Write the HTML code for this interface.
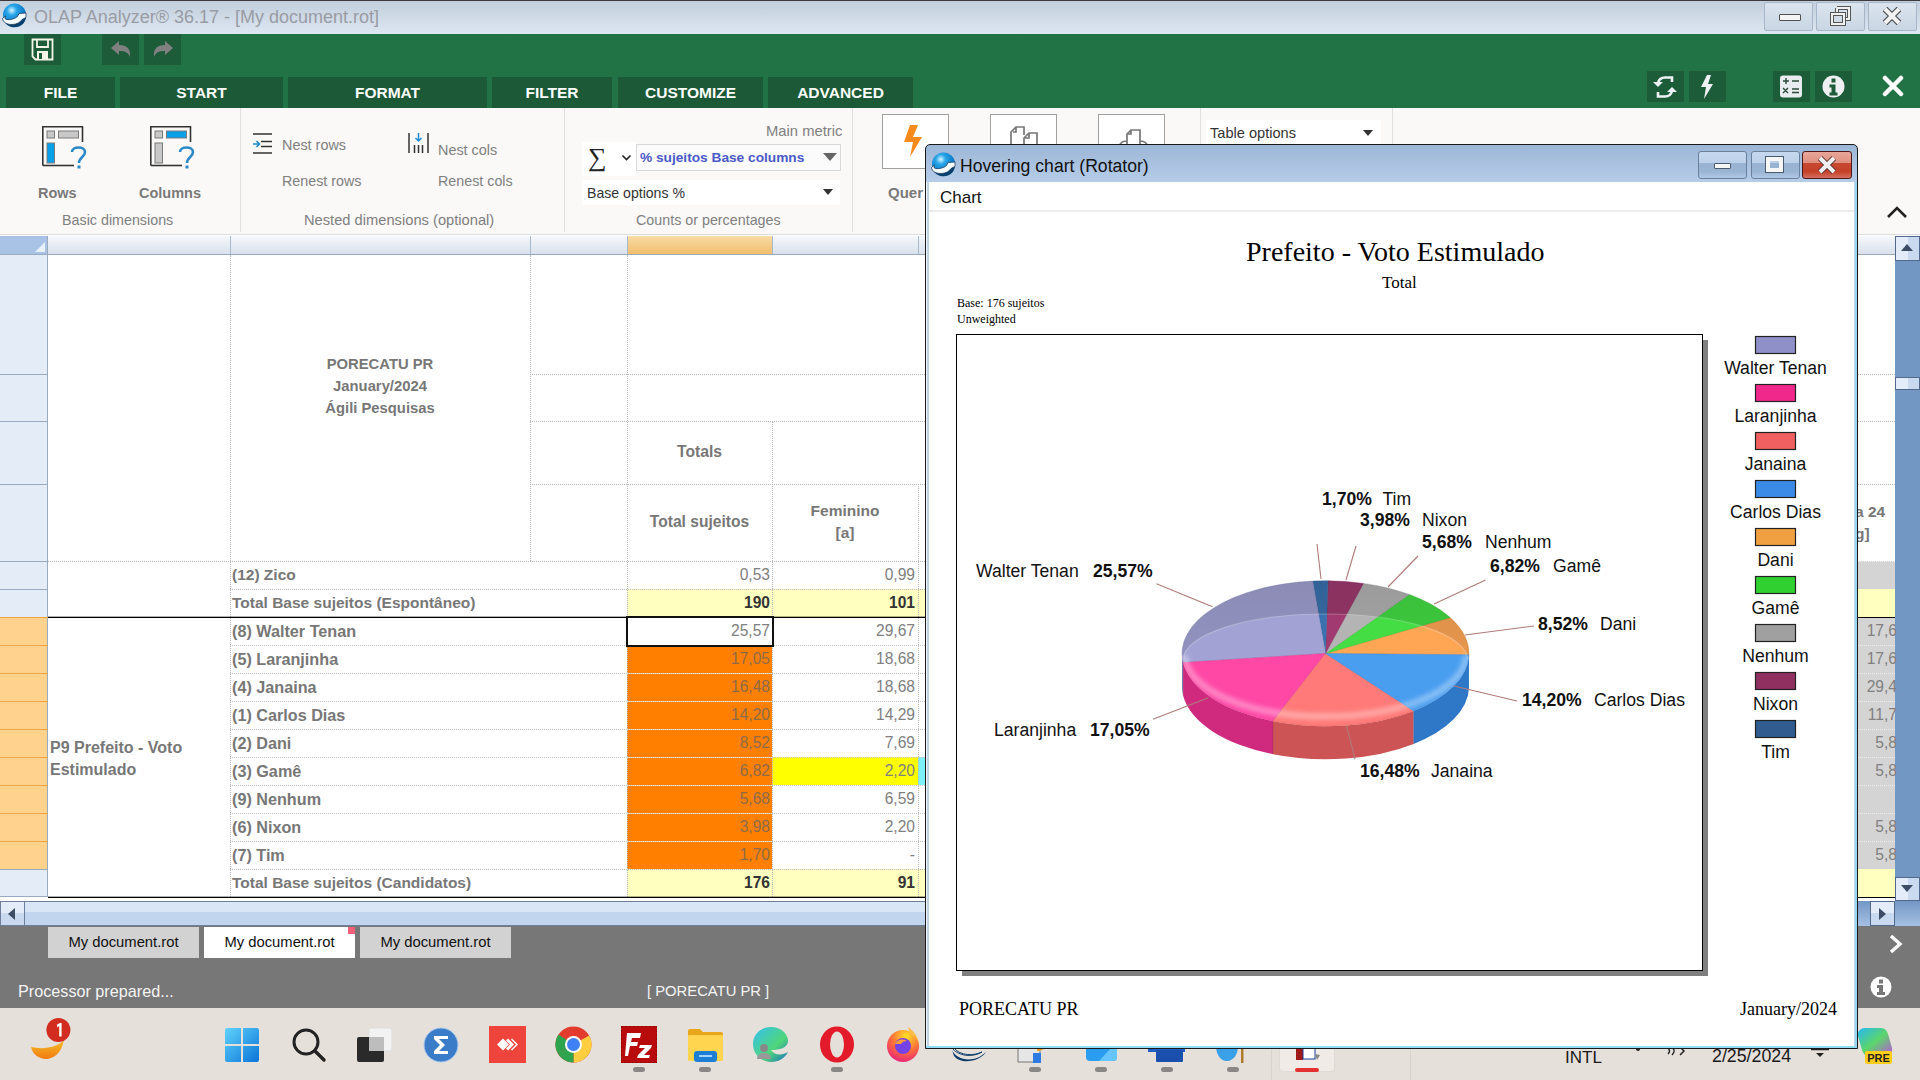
<!DOCTYPE html>
<html><head><meta charset="utf-8">
<style>
*{box-sizing:border-box;margin:0;padding:0}
html,body{width:1920px;height:1080px;overflow:hidden;background:#fff;font-family:"Liberation Sans",sans-serif}
.a{position:absolute}
.t{position:absolute;white-space:pre;line-height:1}
/* title bar */
#title{left:0;top:0;width:1920px;height:34px;background:linear-gradient(#c2cedc,#dde7f2);border-top:1px solid #3b3b3b}
#green{left:0;top:34px;width:1920px;height:74px;background:#217346}
.qb{top:34px;width:37px;height:31px;background:#1c5c38}
.tab{top:77px;height:31px;background:#1c5936;color:#fff;font-weight:bold;font-size:15.5px;text-align:center;line-height:31px}
.gb{top:71px;width:37px;height:31px;background:#1c5c38}
#ribbon{left:0;top:108px;width:1920px;height:127px;background:#faf9f8;border-bottom:1px solid #dcdcdc}
.rsep{top:108px;width:1px;height:124px;background:#e1dfdd}
.rt{color:#808080;font-size:15px}
/* grid */
#grid{left:0;top:235px;width:1920px;height:666px;background:#fff}
.hdr{top:236px;height:19px;background:linear-gradient(#f5f8fc,#d9e1eb);border-bottom:1px solid #9aabbf}
.rh{left:0;width:48px;background:#e4ecf7;border-right:1px solid #9aabbf}
.dl{border-top:1px dotted #bbb}
.dv{border-left:1px dotted #bbb}
.cell{font-size:15.5px;color:#666;line-height:28px;height:28px}
.b{font-weight:bold}
#status{left:0;top:926px;width:1920px;height:82px;background:#777}
#taskbar{left:0;top:1008px;width:1920px;height:72px;background:#e6e0da}
/* chart window */
#cw{left:925px;top:144px;width:933px;height:905px;border:1px solid #1a1a1a;border-radius:6px 6px 0 0;background:#b9d1ea}
</style></head><body>
<div id="title" class="a"></div>
<div class="t" style="left:34px;top:8px;font-size:18px;color:#999ca3">OLAP Analyzer® 36.17 - [My document.rot]</div>
<div id="green" class="a"></div>

<!-- app icon -->
<svg class="a" style="left:0;top:0" width="30" height="32" viewBox="0 0 30 32"><defs><radialGradient id="gl" cx="0.38" cy="0.3" r="0.7"><stop offset="0" stop-color="#d8f6ff"/><stop offset="0.3" stop-color="#2aa6e8"/><stop offset="0.8" stop-color="#0a78c8"/><stop offset="1" stop-color="#06508e"/></radialGradient></defs>
<circle cx="14.5" cy="15" r="11.5" fill="url(#gl)"/>
<path d="M4 21 C7 27 14 28.5 19 26.5 C23 25 25.5 21.5 26 17 L21 20 C18 23 12 24 8 22.5 Z" fill="#06406e"/>
<path d="M2.5 18.5 C3 22.5 7 24.5 12 24.5 C17 24.5 20.5 22 22 19.5 L26 17.5 L26 13 L19 13.5 L17.5 16.5 C15 19 10 20 6.5 19.5 C5 19.3 4.8 18 5.5 16 Z" fill="#f4fcff" stroke="#0d2a4a" stroke-width="0.7"/></svg>
<!-- window buttons -->
<div class="a" style="left:1764px;top:2px;width:49px;height:29px;border:1px solid #a7b6c8;border-radius:2px;background:linear-gradient(#dbe4ee,#c9d6e4)"></div>
<div class="a" style="left:1779px;top:14px;width:22px;height:7px;background:#f4f4f4;border:1.5px solid #505050;border-radius:1px"></div>
<div class="a" style="left:1816px;top:2px;width:49px;height:29px;border:1px solid #a7b6c8;border-radius:2px;background:linear-gradient(#dbe4ee,#c9d6e4)"></div>
<svg class="a" style="left:1828px;top:5px" width="26" height="22" viewBox="0 0 26 22"><path d="M9 3h12v11h-5M9 3v5" fill="none" stroke="#555" stroke-width="4"/><path d="M9 3h12v11h-5M9 3v5" fill="none" stroke="#f0f0f0" stroke-width="2"/><rect x="4" y="9" width="12" height="10" fill="none" stroke="#555" stroke-width="4"/><rect x="4" y="9" width="12" height="10" fill="none" stroke="#f0f0f0" stroke-width="2"/></svg>
<div class="a" style="left:1868px;top:2px;width:49px;height:29px;border:1px solid #a7b6c8;border-radius:2px;background:linear-gradient(#dbe4ee,#c9d6e4)"></div>
<svg class="a" style="left:1880px;top:6px" width="24" height="20" viewBox="0 0 24 20"><path d="M5 3L19 17M19 3L5 17" stroke="#505050" stroke-width="6.5"/><path d="M5 3L19 17M19 3L5 17" stroke="#f2f2f2" stroke-width="4"/></svg>
<!-- quick access -->
<div class="a qb" style="left:24px"></div>
<svg class="a" style="left:31px;top:38px" width="23" height="23" viewBox="0 0 23 23"><path d="M1.5 1.5h20v20h-17l-3-3z" fill="none" stroke="#f5f5e8" stroke-width="1.8"/><path d="M6 2v7h11V2" fill="none" stroke="#f5f5e8" stroke-width="1.8"/><rect x="6" y="13" width="11" height="8" fill="#f5f5e8"/><rect x="8" y="15" width="3" height="6" fill="#1c5c38"/></svg>
<div class="a qb" style="left:102px"></div>
<svg class="a" style="left:109px;top:38px" width="24" height="22" viewBox="0 0 24 22"><path d="M2 10L10 3v4c8 0 12 4 11 12c-2-5-5-6-11-6v4z" fill="#808080"/></svg>
<div class="a qb" style="left:144px"></div>
<svg class="a" style="left:151px;top:38px" width="24" height="22" viewBox="0 0 24 22"><path d="M22 10L14 3v4c-8 0-12 4-11 12c2-5 5-6 11-6v4z" fill="#808080"/></svg>
<!-- tabs -->
<div class="a tab" style="left:6px;width:109px">FILE</div>
<div class="a tab" style="left:120px;width:163px">START</div>
<div class="a tab" style="left:288px;width:199px">FORMAT</div>
<div class="a tab" style="left:492px;width:120px">FILTER</div>
<div class="a tab" style="left:618px;width:145px">CUSTOMIZE</div>
<div class="a tab" style="left:768px;width:145px">ADVANCED</div>
<!-- right green icons -->
<div class="a gb" style="left:1647px"></div>
<svg class="a" style="left:1651px;top:74px" width="28" height="26" viewBox="0 0 28 26"><path d="M7 9C8 5 11 3.5 14 3.5H21V8" fill="none" stroke="#eef2f5" stroke-width="2.6"/><path d="M2 10h10l-5 5z" fill="#eef2f5" transform="translate(0,-2)"/><path d="M21 17C20 21 17 22.5 14 22.5H7V18" fill="none" stroke="#eef2f5" stroke-width="2.6"/><path d="M16 18h10l-5-5z" fill="#eef2f5"/></svg>
<div class="a gb" style="left:1689px"></div>
<svg class="a" style="left:1698px;top:74px" width="20" height="26" viewBox="0 0 20 26"><path d="M9 1L3 13h5l-2 12 9-15h-5l3-9z" fill="#eef2f5"/></svg>
<div class="a gb" style="left:1773px"></div>
<svg class="a" style="left:1779px;top:75px" width="24" height="23" viewBox="0 0 24 23"><rect x="1" y="0.5" width="22" height="22" rx="3" fill="#e8ecee"/><path d="M4 6h6M7 3v6M13 6h7M4 13l5 5M9 13l-5 5M13 14h7M13 17.5h7" stroke="#2a4a3a" stroke-width="1.4"/></svg>
<div class="a gb" style="left:1815px"></div>
<svg class="a" style="left:1822px;top:75px" width="23" height="23" viewBox="0 0 23 23"><circle cx="11.5" cy="11.5" r="11" fill="#eef0f2"/><rect x="9.5" y="3.5" width="4" height="4" fill="#1c5c38"/><path d="M7.5 9.5h6v8h2v3h-8v-3h2v-5h-2z" fill="#1c5c38"/></svg>
<svg class="a" style="left:1882px;top:75px" width="22" height="22" viewBox="0 0 22 22"><path d="M3 3L19 19M19 3L3 19" stroke="#fff" stroke-width="4.5" stroke-linecap="round"/></svg>
<div id="ribbon" class="a"></div>

<!-- ribbon content -->
<svg class="a" style="left:41px;top:125px" width="48" height="48" viewBox="0 0 48 48">
<path d="M1.8 40.5V1.8H41.5V17" fill="none" stroke="#333" stroke-width="1.6"/><path d="M1.8 40.5H33" fill="none" stroke="#333" stroke-width="1.6"/>
<rect x="6" y="6" width="7.5" height="7" fill="#c8c8c8" stroke="#7a7a7a" stroke-width="1"/>
<rect x="17.5" y="6" width="20" height="7" fill="#c8c8c8" stroke="#7a7a7a" stroke-width="1"/>
<rect x="6" y="18" width="7.5" height="20" fill="#0aa0e8" stroke="#7a7a7a" stroke-width="1"/>
<path d="M31 27c0-6 13-6 13 0c0 5-6 5-6 11" fill="none" stroke="#2a8ac8" stroke-width="2.6"/><rect x="36.5" y="40.5" width="3" height="3" fill="#2a8ac8"/>
</svg>
<div class="t b" style="left:38px;top:186px;font-size:14.5px;color:#7a7a7a">Rows</div>
<svg class="a" style="left:149px;top:125px" width="48" height="48" viewBox="0 0 48 48">
<path d="M1.8 40.5V1.8H41.5V17" fill="none" stroke="#333" stroke-width="1.6"/><path d="M1.8 40.5H33" fill="none" stroke="#333" stroke-width="1.6"/>
<rect x="6" y="6" width="7.5" height="7" fill="#c8c8c8" stroke="#7a7a7a" stroke-width="1"/>
<rect x="17.5" y="6" width="20" height="7" fill="#0aa0e8" stroke="#7a7a7a" stroke-width="1"/>
<rect x="6" y="18" width="7.5" height="20" fill="#c8c8c8" stroke="#7a7a7a" stroke-width="1"/>
<path d="M31 27c0-6 13-6 13 0c0 5-6 5-6 11" fill="none" stroke="#2a8ac8" stroke-width="2.6"/><rect x="36.5" y="40.5" width="3" height="3" fill="#2a8ac8"/>
</svg>
<div class="t b" style="left:139px;top:186px;font-size:14.5px;color:#7a7a7a">Columns</div>
<div class="t rt" style="left:62px;top:213px;font-size:14.3px">Basic dimensions</div>
<div class="a rsep" style="left:240px"></div>
<svg class="a" style="left:252px;top:132px" width="22" height="22" viewBox="0 0 22 22"><path d="M1 2h19M9 9.5h11M9 14.5h11M1 21h19" stroke="#333" stroke-width="1.6"/><path d="M1 12h6M4.5 9l3 3l-3 3" fill="none" stroke="#1e8ad0" stroke-width="1.6"/></svg>
<div class="t rt" style="left:282px;top:138px;font-size:14.4px">Nest rows</div>
<div class="t rt" style="left:282px;top:174px;font-size:14.3px">Renest rows</div>
<svg class="a" style="left:407px;top:132px" width="24" height="22" viewBox="0 0 24 22"><path d="M2 1v20M21 1v20M7.5 13v8M11.5 13v8M15.5 13v8" stroke="#333" stroke-width="1.5"/><path d="M11.5 1v8M8.5 6l3 3l3-3" fill="none" stroke="#1e8ad0" stroke-width="1.5"/></svg>
<div class="t rt" style="left:438px;top:143px;font-size:14.4px">Nest cols</div>
<div class="t rt" style="left:438px;top:174px;font-size:14.3px">Renest cols</div>
<div class="t rt" style="left:304px;top:213px;font-size:14.7px">Nested dimensions (optional)</div>
<div class="a rsep" style="left:564px"></div>
<div class="t rt" style="left:766px;top:124px;font-size:14.8px">Main metric</div>
<div class="a" style="left:582px;top:142px;width:54px;height:34px;background:#fff"></div>
<div class="t" style="left:588px;top:145px;font-size:26px;color:#222;font-family:'Liberation Serif',serif">&#8721;</div>
<svg class="a" style="left:621px;top:154px" width="11" height="8" viewBox="0 0 11 8"><path d="M1.5 1.5l4 4l4-4" fill="none" stroke="#222" stroke-width="1.6"/></svg>
<div class="a" style="left:636px;top:144px;width:205px;height:27px;background:#fbfbfb;border:1px solid #d8d8d8"></div>
<div class="t b" style="left:640px;top:151px;font-size:13.7px;color:#4a5ac8">% sujeitos Base columns</div>
<svg class="a" style="left:822px;top:152px" width="16" height="10" viewBox="0 0 16 10"><path d="M1 1h14l-7 8z" fill="#666"/></svg>
<div class="a" style="left:582px;top:180px;width:258px;height:25px;background:#fff"></div>
<div class="t" style="left:587px;top:186px;font-size:14.1px;color:#333">Base options %</div>
<svg class="a" style="left:823px;top:189px" width="10" height="6" viewBox="0 0 10 6"><path d="M0 0h10l-5 6z" fill="#333"/></svg>
<div class="t rt" style="left:636px;top:213px;font-size:14.3px">Counts or percentages</div>
<div class="a rsep" style="left:852px"></div>
<div class="a" style="left:882px;top:114px;width:67px;height:55px;background:#fff;border:1px solid #a0a0a0"></div>
<svg class="a" style="left:902px;top:124px" width="22" height="34" viewBox="0 0 22 34"><path d="M8 1h8l-5 12h9L8 33l3-15H2z" fill="#f78a1c"/></svg>
<div class="t b" style="left:888px;top:185px;font-size:15px;color:#7a7a7a">Quer</div>
<div class="a" style="left:990px;top:114px;width:67px;height:55px;background:#fff;border:1px solid #a0a0a0"></div>
<svg class="a" style="left:1007px;top:125px" width="34" height="20" viewBox="0 0 34 20"><path d="M4 20V7l5-5h8v8M6 7h3V2M17 20V13l5-5h8v12M18 13h4V8" fill="none" stroke="#777" stroke-width="1.7"/></svg>
<div class="a" style="left:1098px;top:114px;width:67px;height:55px;background:#fff;border:1px solid #a0a0a0"></div>
<svg class="a" style="left:1116px;top:128px" width="34" height="18" viewBox="0 0 34 18"><path d="M11 18V6l4-4h9v16M12 6h3V2M3 18c2-4 4-5 8-5M24 13c4 0 6 1 8 5" fill="none" stroke="#777" stroke-width="1.7"/></svg>
<div class="a rsep" style="left:1200px"></div>
<div class="a" style="left:1206px;top:120px;width:175px;height:25px;background:#fff"></div>
<div class="t" style="left:1210px;top:126px;font-size:14.6px;color:#333">Table options</div>
<svg class="a" style="left:1363px;top:130px" width="10" height="6" viewBox="0 0 10 6"><path d="M0 0h10l-5 6z" fill="#333"/></svg>
<div class="a rsep" style="left:1392px"></div>
<svg class="a" style="left:1886px;top:205px" width="22" height="14" viewBox="0 0 22 14"><path d="M2 12l9-9l9 9" fill="none" stroke="#222" stroke-width="2.6"/></svg>
<div id="grid" class="a"></div>
<div class="a hdr" style="left:48px;width:1847px"></div>
<div class="a" style="left:627px;top:236px;width:145px;height:18px;background:linear-gradient(#f8dca6,#f1be6c)"></div>
<div class="a" style="left:230px;top:236px;width:1px;height:18px;background:#a9b9cc"></div>
<div class="a" style="left:530px;top:236px;width:1px;height:18px;background:#a9b9cc"></div>
<div class="a" style="left:627px;top:236px;width:1px;height:18px;background:#a9b9cc"></div>
<div class="a" style="left:772px;top:236px;width:1px;height:18px;background:#a9b9cc"></div>
<div class="a" style="left:918px;top:236px;width:1px;height:18px;background:#a9b9cc"></div>
<div class="a" style="left:0;top:236px;width:48px;height:19px;background:#a8c3e6;border-right:1px solid #9aabbf;border-bottom:1px solid #9aabbf"></div>
<svg class="a" style="left:35px;top:242px" width="10" height="10" viewBox="0 0 10 10"><path d="M10 0V10H0z" fill="#e8f0fa"/></svg>
<div class="a" style="left:0;top:255px;width:48px;height:642px;background:#e4ecf7;border-right:1px solid #9aabbf"></div>
<div class="a" style="left:0;top:617px;width:48px;height:252px;background:#ffd38e;border-right:1px solid #9aabbf"></div>
<div class="a" style="left:0;top:374px;width:48px;height:1px;background:#9aabbf"></div>
<div class="a" style="left:0;top:421px;width:48px;height:1px;background:#9aabbf"></div>
<div class="a" style="left:0;top:484px;width:48px;height:1px;background:#9aabbf"></div>
<div class="a" style="left:0;top:561px;width:48px;height:1px;background:#9aabbf"></div>
<div class="a" style="left:0;top:589px;width:48px;height:1px;background:#9aabbf"></div>
<div class="a" style="left:0;top:869px;width:48px;height:1px;background:#9aabbf"></div>
<div class="a" style="left:0;top:896px;width:48px;height:1px;background:#9aabbf"></div>
<div class="a" style="left:0;top:617px;width:48px;height:1px;background:#eea34a"></div>
<div class="a" style="left:0;top:645px;width:48px;height:1px;background:#eea34a"></div>
<div class="a" style="left:0;top:673px;width:48px;height:1px;background:#eea34a"></div>
<div class="a" style="left:0;top:701px;width:48px;height:1px;background:#eea34a"></div>
<div class="a" style="left:0;top:729px;width:48px;height:1px;background:#eea34a"></div>
<div class="a" style="left:0;top:757px;width:48px;height:1px;background:#eea34a"></div>
<div class="a" style="left:0;top:785px;width:48px;height:1px;background:#eea34a"></div>
<div class="a" style="left:0;top:813px;width:48px;height:1px;background:#eea34a"></div>
<div class="a" style="left:0;top:841px;width:48px;height:1px;background:#eea34a"></div>
<div class="a" style="left:627px;top:645px;width:145px;height:28px;background:#ff8000"></div>
<div class="a" style="left:627px;top:673px;width:145px;height:28px;background:#ff8000"></div>
<div class="a" style="left:627px;top:701px;width:145px;height:28px;background:#ff8000"></div>
<div class="a" style="left:627px;top:729px;width:145px;height:28px;background:#ff8000"></div>
<div class="a" style="left:627px;top:757px;width:145px;height:28px;background:#ff8000"></div>
<div class="a" style="left:627px;top:785px;width:145px;height:28px;background:#ff8000"></div>
<div class="a" style="left:627px;top:813px;width:145px;height:28px;background:#ff8000"></div>
<div class="a" style="left:627px;top:841px;width:145px;height:28px;background:#ff8000"></div>
<div class="a" style="left:627px;top:589px;width:298px;height:28px;background:#ffffc0"></div>
<div class="a" style="left:627px;top:869px;width:298px;height:28px;background:#ffffc0"></div>
<div class="a" style="left:772px;top:757px;width:146px;height:28px;background:#ffff00"></div>
<div class="a" style="left:918px;top:757px;width:7px;height:28px;background:#7ef0f8"></div>
<div class="a" style="left:530px;top:374px;width:395px;height:0;border-top:1px dotted #b8b8b8"></div>
<div class="a" style="left:530px;top:421px;width:395px;height:0;border-top:1px dotted #b8b8b8"></div>
<div class="a" style="left:530px;top:484px;width:395px;height:0;border-top:1px dotted #b8b8b8"></div>
<div class="a" style="left:48px;top:561px;width:877px;height:0;border-top:1px dotted #b8b8b8"></div>
<div class="a" style="left:230px;top:589px;width:695px;height:0;border-top:1px dotted #b8b8b8"></div>
<div class="a" style="left:230px;top:645px;width:695px;height:0;border-top:1px dotted #c8c8c8"></div>
<div class="a" style="left:230px;top:673px;width:695px;height:0;border-top:1px dotted #c8c8c8"></div>
<div class="a" style="left:230px;top:701px;width:695px;height:0;border-top:1px dotted #c8c8c8"></div>
<div class="a" style="left:230px;top:729px;width:695px;height:0;border-top:1px dotted #c8c8c8"></div>
<div class="a" style="left:230px;top:757px;width:695px;height:0;border-top:1px dotted #c8c8c8"></div>
<div class="a" style="left:230px;top:785px;width:695px;height:0;border-top:1px dotted #c8c8c8"></div>
<div class="a" style="left:230px;top:813px;width:695px;height:0;border-top:1px dotted #c8c8c8"></div>
<div class="a" style="left:230px;top:841px;width:695px;height:0;border-top:1px dotted #c8c8c8"></div>
<div class="a" style="left:230px;top:869px;width:695px;height:0;border-top:1px dotted #b8b8b8"></div>
<div class="a" style="left:230px;top:255px;width:0;height:642px;border-left:1px dotted #b8b8b8"></div>
<div class="a" style="left:530px;top:255px;width:0;height:306px;border-left:1px dotted #b8b8b8"></div>
<div class="a" style="left:627px;top:255px;width:0;height:642px;border-left:1px dotted #b8b8b8"></div>
<div class="a" style="left:772px;top:421px;width:0;height:476px;border-left:1px dotted #b8b8b8"></div>
<div class="a" style="left:918px;top:484px;width:0;height:413px;border-left:1px dotted #b8b8b8"></div>
<div class="a" style="left:627px;top:645px;width:145px;height:0;border-top:1px dotted #ffe0c0"></div>
<div class="a" style="left:627px;top:673px;width:145px;height:0;border-top:1px dotted #ffe0c0"></div>
<div class="a" style="left:627px;top:701px;width:145px;height:0;border-top:1px dotted #ffe0c0"></div>
<div class="a" style="left:627px;top:729px;width:145px;height:0;border-top:1px dotted #ffe0c0"></div>
<div class="a" style="left:627px;top:757px;width:145px;height:0;border-top:1px dotted #ffe0c0"></div>
<div class="a" style="left:627px;top:785px;width:145px;height:0;border-top:1px dotted #ffe0c0"></div>
<div class="a" style="left:627px;top:813px;width:145px;height:0;border-top:1px dotted #ffe0c0"></div>
<div class="a" style="left:627px;top:841px;width:145px;height:0;border-top:1px dotted #ffe0c0"></div>
<div class="a" style="left:48px;top:617px;width:877px;height:1px;background:#000"></div><div class="a" style="left:48px;top:616px;width:877px;height:1px;background:rgba(0,0,0,0.3)"></div>
<div class="a" style="left:48px;top:897px;width:877px;height:1px;background:#000"></div><div class="a" style="left:48px;top:896px;width:877px;height:1px;background:rgba(0,0,0,0.3)"></div>
<div class="a" style="left:626px;top:616px;width:148px;height:31px;border:2.5px solid #111"></div>
<div class="t b" style="left:230px;width:300px;top:353px;text-align:center;font-size:14.8px;line-height:22px;color:#777;white-space:normal">PORECATU PR<br>January/2024<br>Ágili Pesquisas</div>
<div class="t b" style="left:627px;width:145px;top:444px;text-align:center;font-size:15.7px;color:#777">Totals</div>
<div class="t b" style="left:627px;width:145px;top:514px;text-align:center;font-size:15.6px;color:#777">Total sujeitos</div>
<div class="t b" style="left:772px;width:146px;top:500px;text-align:center;font-size:15.5px;line-height:22px;color:#777;white-space:normal">Feminino<br>[a]</div>
<div class="t b" style="left:50px;top:737px;font-size:16px;line-height:22px;color:#777;white-space:normal;width:180px">P9 Prefeito - Voto Estimulado</div>
<div class="t b" style="left:232px;top:561px;font-size:15.5px;line-height:28px;color:#777">(12) Zico</div>
<div class="t" style="left:627px;width:143px;top:561px;text-align:right;font-size:15.6px;line-height:28px;color:#808080;">0,53</div>
<div class="t" style="left:772px;width:143px;top:561px;text-align:right;font-size:15.6px;line-height:28px;color:#808080;">0,99</div>
<div class="t b" style="left:232px;top:589px;font-size:15.5px;line-height:28px;color:#777">Total Base sujeitos (Espontâneo)</div>
<div class="t" style="left:627px;width:143px;top:589px;text-align:right;font-size:15.6px;line-height:28px;font-weight:bold;color:#333;">190</div>
<div class="t" style="left:772px;width:143px;top:589px;text-align:right;font-size:15.6px;line-height:28px;font-weight:bold;color:#333;">101</div>
<div class="t b" style="left:232px;top:617px;font-size:16.2px;line-height:28px;color:#777">(8) Walter Tenan</div>
<div class="t" style="left:627px;width:143px;top:617px;text-align:right;font-size:15.6px;line-height:28px;color:#808080;">25,57</div>
<div class="t" style="left:772px;width:143px;top:617px;text-align:right;font-size:15.6px;line-height:28px;color:#808080;">29,67</div>
<div class="t b" style="left:232px;top:645px;font-size:16.2px;line-height:28px;color:#777">(5) Laranjinha</div>
<div class="t" style="left:627px;width:143px;top:645px;text-align:right;font-size:15.6px;line-height:28px;color:#8e6a48;">17,05</div>
<div class="t" style="left:772px;width:143px;top:645px;text-align:right;font-size:15.6px;line-height:28px;color:#808080;">18,68</div>
<div class="t b" style="left:232px;top:673px;font-size:16.2px;line-height:28px;color:#777">(4) Janaina</div>
<div class="t" style="left:627px;width:143px;top:673px;text-align:right;font-size:15.6px;line-height:28px;color:#8e6a48;">16,48</div>
<div class="t" style="left:772px;width:143px;top:673px;text-align:right;font-size:15.6px;line-height:28px;color:#808080;">18,68</div>
<div class="t b" style="left:232px;top:701px;font-size:16.2px;line-height:28px;color:#777">(1) Carlos Dias</div>
<div class="t" style="left:627px;width:143px;top:701px;text-align:right;font-size:15.6px;line-height:28px;color:#8e6a48;">14,20</div>
<div class="t" style="left:772px;width:143px;top:701px;text-align:right;font-size:15.6px;line-height:28px;color:#808080;">14,29</div>
<div class="t b" style="left:232px;top:729px;font-size:16.2px;line-height:28px;color:#777">(2) Dani</div>
<div class="t" style="left:627px;width:143px;top:729px;text-align:right;font-size:15.6px;line-height:28px;color:#8e6a48;">8,52</div>
<div class="t" style="left:772px;width:143px;top:729px;text-align:right;font-size:15.6px;line-height:28px;color:#808080;">7,69</div>
<div class="t b" style="left:232px;top:757px;font-size:16.2px;line-height:28px;color:#777">(3) Gamê</div>
<div class="t" style="left:627px;width:143px;top:757px;text-align:right;font-size:15.6px;line-height:28px;color:#8e6a48;">6,82</div>
<div class="t" style="left:772px;width:143px;top:757px;text-align:right;font-size:15.6px;line-height:28px;color:#808080;">2,20</div>
<div class="t b" style="left:232px;top:785px;font-size:16.2px;line-height:28px;color:#777">(9) Nenhum</div>
<div class="t" style="left:627px;width:143px;top:785px;text-align:right;font-size:15.6px;line-height:28px;color:#8e6a48;">5,68</div>
<div class="t" style="left:772px;width:143px;top:785px;text-align:right;font-size:15.6px;line-height:28px;color:#808080;">6,59</div>
<div class="t b" style="left:232px;top:813px;font-size:16.2px;line-height:28px;color:#777">(6) Nixon</div>
<div class="t" style="left:627px;width:143px;top:813px;text-align:right;font-size:15.6px;line-height:28px;color:#8e6a48;">3,98</div>
<div class="t" style="left:772px;width:143px;top:813px;text-align:right;font-size:15.6px;line-height:28px;color:#808080;">2,20</div>
<div class="t b" style="left:232px;top:841px;font-size:16.2px;line-height:28px;color:#777">(7) Tim</div>
<div class="t" style="left:627px;width:143px;top:841px;text-align:right;font-size:15.6px;line-height:28px;color:#8e6a48;">1,70</div>
<div class="t" style="left:772px;width:143px;top:841px;text-align:right;font-size:15.6px;line-height:28px;color:#808080;">-</div>
<div class="t b" style="left:232px;top:869px;font-size:15.5px;line-height:28px;color:#777">Total Base sujeitos (Candidatos)</div>
<div class="t" style="left:627px;width:143px;top:869px;text-align:right;font-size:15.6px;line-height:28px;font-weight:bold;color:#333;">176</div>
<div class="t" style="left:772px;width:143px;top:869px;text-align:right;font-size:15.6px;line-height:28px;font-weight:bold;color:#333;">91</div>
<div id="status" class="a"></div>

<!-- h scrollbar -->
<div class="a" style="left:0;top:901px;width:1920px;height:25px;background:linear-gradient(#d9e6f6 0,#d9e6f6 45%,#c2d5ef 45%,#c2d5ef 100%);border-top:1px solid #6d7f9a;border-bottom:1px solid #6d7f9a"></div>
<div class="a" style="left:0;top:901px;width:25px;height:25px;border:1px solid #6d7f9a;background:linear-gradient(#e3ecf8 0,#e3ecf8 50%,#c9daf0 50%)"></div>
<svg class="a" style="left:8px;top:908px" width="8" height="12" viewBox="0 0 8 12"><path d="M7 0V12L0 6z" fill="#3d4d66"/></svg>
<!-- v scrollbar -->
<div class="a" style="left:1895px;top:236px;width:25px;height:665px;background:#7297c2"></div>
<div class="a" style="left:1895px;top:236px;width:25px;height:25px;border:1px solid #52698b;background:linear-gradient(90deg,#e3ecf8 0,#e3ecf8 50%,#c9daf0 50%)"></div>
<svg class="a" style="left:1901px;top:244px" width="12" height="8" viewBox="0 0 12 8"><path d="M0 7H12L6 0z" fill="#3d4d66"/></svg>
<div class="a" style="left:1895px;top:377px;width:25px;height:13px;border:1px solid #52698b;background:linear-gradient(90deg,#e3ecf8 0,#e3ecf8 50%,#c9daf0 50%)"></div>
<div class="a" style="left:1895px;top:877px;width:25px;height:24px;border:1px solid #52698b;background:linear-gradient(90deg,#e3ecf8 0,#e3ecf8 50%,#c9daf0 50%)"></div>
<svg class="a" style="left:1901px;top:885px" width="12" height="8" viewBox="0 0 12 8"><path d="M0 0H12L6 7z" fill="#3d4d66"/></svg>
<div class="a" style="left:1857px;top:901px;width:63px;height:25px;background:linear-gradient(#7397c4,#a6c0e4)"></div>
<div class="a" style="left:1870px;top:901px;width:25px;height:25px;border:1px solid #52698b;background:linear-gradient(#e3ecf8 0,#e3ecf8 50%,#c9daf0 50%)"></div>
<svg class="a" style="left:1879px;top:908px" width="8" height="12" viewBox="0 0 8 12"><path d="M0 0V12L7 6z" fill="#3d4d66"/></svg>
<!-- right hidden grid portion -->
<div class="a" style="left:1857px;top:561px;width:38px;height:336px;background:#d4d4d4"></div>
<div class="a" style="left:1857px;top:589px;width:38px;height:28px;background:#ffffc0"></div>
<div class="a" style="left:1857px;top:869px;width:38px;height:28px;background:#ffffc0"></div>
<div class="a" style="left:1857px;top:897px;width:38px;height:1px;background:#000"></div>
<div class="a" style="left:1857px;top:617px;width:38px;height:1px;background:#000"></div>

<div class="a" style="left:1857px;top:374px;width:38px;height:0;border-top:1px dotted #b8b8b8"></div>
<div class="a" style="left:1857px;top:421px;width:38px;height:0;border-top:1px dotted #b8b8b8"></div>
<div class="a" style="left:1857px;top:484px;width:38px;height:0;border-top:1px dotted #b8b8b8"></div>
<div class="a" style="left:1857px;top:561px;width:38px;height:0;border-top:1px dotted #f0f0f0"></div>
<div class="a" style="left:1857px;top:645px;width:38px;height:0;border-top:1px dotted #eeeeee"></div>
<div class="a" style="left:1857px;top:673px;width:38px;height:0;border-top:1px dotted #eeeeee"></div>
<div class="a" style="left:1857px;top:701px;width:38px;height:0;border-top:1px dotted #eeeeee"></div>
<div class="a" style="left:1857px;top:729px;width:38px;height:0;border-top:1px dotted #eeeeee"></div>
<div class="a" style="left:1857px;top:757px;width:38px;height:0;border-top:1px dotted #eeeeee"></div>
<div class="a" style="left:1857px;top:785px;width:38px;height:0;border-top:1px dotted #eeeeee"></div>
<div class="a" style="left:1857px;top:813px;width:38px;height:0;border-top:1px dotted #eeeeee"></div>
<div class="a" style="left:1857px;top:841px;width:38px;height:0;border-top:1px dotted #eeeeee"></div>
<div class="t b" style="left:1855px;top:501px;font-size:15.5px;line-height:22px;color:#777;white-space:normal;width:60px">a 24<br>g]</div>
<div class="t" style="left:1857px;width:40px;top:617px;text-align:right;font-size:15.6px;line-height:28px;color:#808080;overflow:hidden">17,6</div>
<div class="t" style="left:1857px;width:40px;top:645px;text-align:right;font-size:15.6px;line-height:28px;color:#808080;overflow:hidden">17,6</div>
<div class="t" style="left:1857px;width:40px;top:673px;text-align:right;font-size:15.6px;line-height:28px;color:#808080;overflow:hidden">29,4</div>
<div class="t" style="left:1857px;width:40px;top:701px;text-align:right;font-size:15.6px;line-height:28px;color:#808080;overflow:hidden">11,7</div>
<div class="t" style="left:1857px;width:40px;top:729px;text-align:right;font-size:15.6px;line-height:28px;color:#808080;overflow:hidden">5,8</div>
<div class="t" style="left:1857px;width:40px;top:757px;text-align:right;font-size:15.6px;line-height:28px;color:#808080;overflow:hidden">5,8</div>
<div class="t" style="left:1857px;width:40px;top:785px;text-align:right;font-size:15.6px;line-height:28px;color:#808080;overflow:hidden"></div>
<div class="t" style="left:1857px;width:40px;top:813px;text-align:right;font-size:15.6px;line-height:28px;color:#808080;overflow:hidden">5,8</div>
<div class="t" style="left:1857px;width:40px;top:841px;text-align:right;font-size:15.6px;line-height:28px;color:#808080;overflow:hidden">5,8</div>

<!-- status area -->
<div class="a" style="left:48px;top:927px;width:151px;height:31px;background:#d2d2d2"></div>
<div class="t" style="left:48px;width:151px;top:927px;font-size:14.8px;line-height:31px;text-align:center;color:#111">My document.rot</div>
<div class="a" style="left:204px;top:927px;width:151px;height:31px;background:#fff"></div>
<div class="t" style="left:204px;width:151px;top:927px;font-size:14.8px;line-height:31px;text-align:center;color:#111">My document.rot</div>
<div class="a" style="left:348px;top:927px;width:7px;height:7px;background:#f0607a"></div>
<div class="a" style="left:360px;top:927px;width:151px;height:31px;background:#d2d2d2"></div>
<div class="t" style="left:360px;width:151px;top:927px;font-size:14.8px;line-height:31px;text-align:center;color:#111">My document.rot</div>
<div class="t" style="left:18px;top:983px;font-size:16.2px;color:#f4f4f4">Processor prepared...</div>
<div class="t" style="left:647px;top:984px;font-size:14.8px;color:#f4f4f4">[ PORECATU PR ]</div>
<svg class="a" style="left:1888px;top:934px" width="16" height="20" viewBox="0 0 16 20"><path d="M3 2l9 8l-9 8" fill="none" stroke="#fff" stroke-width="3.4"/></svg>
<svg class="a" style="left:1870px;top:976px" width="22" height="22" viewBox="0 0 22 22"><circle cx="11" cy="11" r="10.5" fill="#fff"/><rect x="9" y="3.5" width="4" height="4" fill="#777"/><path d="M7 9h6v7h2v3H7v-3h2v-4H7z" fill="#777"/></svg>
<div id="taskbar" class="a"></div>

<!-- taskbar icons -->
<svg class="a" style="left:28px;top:1016px" width="46" height="50" viewBox="0 0 46 50">
<defs><linearGradient id="mo" x1="0" y1="0" x2="0" y2="1"><stop offset="0" stop-color="#f4c02a"/><stop offset="1" stop-color="#f27a10"/></linearGradient></defs>
<path d="M3 31C6 46 31 50 36 24C30 31 16 34 3 31z" fill="url(#mo)"/>
<circle cx="30.4" cy="14" r="12" fill="#d22b1f"/>
<path d="M29 8.5l3-1.5h1.6v13.5h-2.4V10.3l-2.2 1z" fill="#fff"/>
</svg>
<svg class="a" style="left:224px;top:1027px" width="36" height="36" viewBox="0 0 36 36">
<defs><linearGradient id="wl" x1="0" y1="0" x2="1" y2="1"><stop offset="0" stop-color="#5fd3fb"/><stop offset="1" stop-color="#0a74d8"/></linearGradient></defs>
<path d="M1 3a2 2 0 0 1 2-2h14v16H1zM19 1h14a2 2 0 0 1 2 2v14H19zM1 19h16v16H3a2 2 0 0 1-2-2zM19 19h16v14a2 2 0 0 1-2 2H19z" fill="url(#wl)"/>
</svg>
<svg class="a" style="left:291px;top:1027px" width="36" height="36" viewBox="0 0 36 36"><circle cx="15" cy="15" r="12" fill="none" stroke="#222" stroke-width="3"/><path d="M24 24l9 9" stroke="#222" stroke-width="3.4" stroke-linecap="round"/></svg>
<svg class="a" style="left:356px;top:1027px" width="38" height="36" viewBox="0 0 38 36"><rect x="13" y="1" width="23" height="23" rx="2" fill="#f2f2f2" stroke="#ddd"/><rect x="1" y="10" width="27" height="25" rx="2" fill="#2a2a2a"/><rect x="13" y="10" width="15" height="14" fill="#bdbdbd"/></svg>
<svg class="a" style="left:423px;top:1027px" width="36" height="36" viewBox="0 0 36 36"><circle cx="18" cy="18" r="17" fill="#3a7cc8" stroke="#a9c9ee" stroke-width="1"/><path d="M11 9h14v3H16l6 6l-6 6h9v3H11v-3l6-6l-6-6z" fill="#fff"/></svg>
<svg class="a" style="left:489px;top:1026px" width="37" height="37" viewBox="0 0 37 37"><rect width="37" height="37" fill="#ef443b"/><path d="M8 18.5l6-6l6 6l-6 6z" fill="#fff"/><path d="M19 12.5l6 6l-6 6l-2-2l4-4l-4-4zM23 12.5l6 6l-6 6l-1-1l5-5l-5-5z" fill="#fff"/></svg>
<svg class="a" style="left:555px;top:1026px" width="37" height="37" viewBox="0 0 37 37"><circle cx="18.5" cy="18.5" r="18" fill="#e33b2e"/><path d="M18.5 18.5L2.9 27.5A18 18 0 0 1 3.5 8.5z" fill="#2ea44f"/><path d="M18.5 18.5L34.1 9.5A18 18 0 0 1 18.5 36.5z" fill="#ffcd40"/><path d="M18.5 18.5L18.5 36.5A18 18 0 0 1 2.9 27.5z" fill="#2ea44f"/><circle cx="18.5" cy="18.5" r="8.5" fill="#fff"/><circle cx="18.5" cy="18.5" r="6.5" fill="#3f81f4"/></svg>
<svg class="a" style="left:621px;top:1026px" width="36" height="37" viewBox="0 0 36 37"><rect width="36" height="37" fill="#b80b0b" stroke="#6b0000" stroke-dasharray="2 2"/><path d="M6 7h14l-1 5h-8l-1 4h7l-1 4h-7l-2 10H4z" fill="#fff"/><path d="M19 19h12l-1 3l-7 7h6l-1 3H16l1-3l7-7h-6z" fill="#fff"/></svg>
<svg class="a" style="left:687px;top:1027px" width="37" height="36" viewBox="0 0 37 36"><path d="M1 4a2 2 0 0 1 2-2h10l3 3h18a2 2 0 0 1 2 2v4H1z" fill="#e8a71a"/><rect x="1" y="8" width="35" height="26" rx="1" fill="#ffd44e"/><rect x="7" y="24" width="23" height="11" rx="3" fill="#1c7fd4"/><rect x="12" y="28" width="13" height="2" fill="#9fd2ff"/></svg>
<svg class="a" style="left:752px;top:1026px" width="38" height="37" viewBox="0 0 38 37"><defs><linearGradient id="ed" x1="0" y1="0" x2="1" y2="1"><stop offset="0" stop-color="#35c1f1"/><stop offset="0.6" stop-color="#50d67a"/><stop offset="1" stop-color="#1b6fbf"/></linearGradient></defs><path d="M19 1C8 1 1 9 1 18c0 11 9 18 18 18c8 0 14-4 17-10c-5 3-13 4-17-2c8 0 17-2 17-9C36 7 28 1 19 1z" fill="url(#ed)"/><circle cx="12" cy="22" r="4" fill="#888"/><path d="M5 33c0-5 4-6 7-6s7 1 7 6z" fill="#999"/></svg>
<svg class="a" style="left:819px;top:1026px" width="36" height="37" viewBox="0 0 36 37"><ellipse cx="18" cy="18.5" rx="17" ry="18" fill="#e31a2a"/><ellipse cx="18" cy="18.5" rx="7" ry="13" fill="#e6e0da"/></svg>
<svg class="a" style="left:884px;top:1025px" width="38" height="38" viewBox="0 0 38 38"><defs><radialGradient id="ff" cx="0.6" cy="0.2" r="0.9"><stop offset="0" stop-color="#ffe226"/><stop offset="0.5" stop-color="#ff7139"/><stop offset="1" stop-color="#e31587"/></radialGradient></defs><circle cx="19" cy="21" r="16" fill="url(#ff)"/><path d="M24 2c6 4 11 10 11 19c0-6-4-10-9-12z" fill="#ffbd4f"/><circle cx="19" cy="21" r="8" fill="#7542e5"/><path d="M11 19c2-4 7-6 12-3c-3 0-5 1-6 3z" fill="#ff9a3a"/></svg>
<!-- under chart window visible bits -->
<svg class="a" style="left:950px;top:1044px" width="38" height="20" viewBox="0 0 38 20"><path d="M2 6c4 10 22 14 34 2c-4 8-24 14-32 4z" fill="#0e3d6a"/><path d="M2 4c6 8 20 10 30 4c-8 4-22 4-28-4z" fill="#fff" stroke="#0e3d6a"/></svg>
<svg class="a" style="left:1017px;top:1046px" width="30" height="18" viewBox="0 0 30 18"><rect x="1" y="1" width="22" height="15" fill="#e6e6e6" stroke="#777"/><rect x="16" y="7" width="8" height="10" fill="#2d7be0"/><path d="M20 4l8-3" stroke="#f0a020" stroke-width="3"/></svg>
<svg class="a" style="left:1085px;top:1046px" width="33" height="16" viewBox="0 0 33 16"><path d="M1 0h31v11a4 4 0 0 1-4 4H5a4 4 0 0 1-4-4z" fill="#2a9df0"/><path d="M14 15L26 2h6v9a4 4 0 0 1-4 4z" fill="#66c4ff"/></svg>
<svg class="a" style="left:1148px;top:1046px" width="37" height="17" viewBox="0 0 37 17"><rect x="0" y="0" width="37" height="6" fill="#1f5fc4"/><rect x="8" y="4" width="27" height="12" rx="1" fill="#1a4fae"/></svg>
<svg class="a" style="left:1216px;top:1046px" width="30" height="17" viewBox="0 0 30 17"><path d="M0 0h22c0 8-4 14-10 15c-6 1-12-5-12-15z" fill="#3aa0e8"/><rect x="25" y="0" width="2.5" height="17" fill="#b07a30"/></svg>
<div class="a" style="left:1279px;top:1048px;width:56px;height:24px;background:#f0ebe6;border:1px solid #e0dad4;border-top:none;border-radius:0 0 4px 4px"></div>
<svg class="a" style="left:1292px;top:1048px" width="30" height="14" viewBox="0 0 30 14"><rect x="4" y="0" width="7" height="12" fill="#a01a1a"/><rect x="11" y="0" width="12" height="11" fill="#fff" stroke="#1a3a9a"/><path d="M23 6l5 1l-3 5z" fill="#888"/></svg>
<div class="a" style="left:1295px;top:1068px;width:24px;height:4px;border-radius:2px;background:#e33030"></div>
<div class="a" style="left:1271px;top:1048px;width:1px;height:32px;background:#d8d2cc"></div>
<div class="a" style="left:1410px;top:1048px;width:1px;height:32px;background:#d8d2cc"></div>
<div class="t" style="left:1565px;top:1049px;font-size:17px;color:#1a1a1a">INTL</div>
<div class="a" style="left:1636px;top:1047px;width:4px;height:4px;border-radius:2px;background:#222"></div>
<svg class="a" style="left:1666px;top:1046px" width="20" height="10" viewBox="0 0 20 10"><path d="M2 2c2 2 2 4 0 6M6 1c3 3 3 5 0 8M14 1l4 4l-4 4" fill="none" stroke="#222" stroke-width="1.5"/></svg>
<div class="t" style="left:1712px;top:1048px;font-size:17.8px;color:#1a1a1a">2/25/2024</div>
<svg class="a" style="left:1810px;top:1046px" width="20" height="12" viewBox="0 0 20 12"><path d="M1 3h18" stroke="#222" stroke-width="2.5"/><path d="M6 7h8l-4 4z" fill="#222"/></svg>
<svg class="a" style="left:1857px;top:1026px" width="36" height="38" viewBox="0 0 36 38"><defs><linearGradient id="cp" x1="0" y1="0" x2="1" y2="1"><stop offset="0" stop-color="#27b7f5"/><stop offset="0.5" stop-color="#5bd66a"/><stop offset="1" stop-color="#c04fe0"/></linearGradient></defs><path d="M8 2h16c4 0 6 3 7 6l4 14c1 4-2 8-6 8H12c-4 0-6-3-7-6L1 10C0 6 3 2 8 2z" fill="url(#cp)"/><rect x="8" y="25" width="27" height="13" rx="2" fill="#ffcd1a"/><text x="21.5" y="36" font-family="Liberation Sans" font-weight="bold" font-size="11" fill="#222" text-anchor="middle">PRE</text></svg>
<div class="a" style="left:633px;top:1067px;width:12px;height:5px;border-radius:3px;background:#8a8784"></div>
<div class="a" style="left:699px;top:1067px;width:12px;height:5px;border-radius:3px;background:#8a8784"></div>
<div class="a" style="left:831px;top:1067px;width:12px;height:5px;border-radius:3px;background:#8a8784"></div>
<div class="a" style="left:1029px;top:1067px;width:12px;height:5px;border-radius:3px;background:#8a8784"></div>
<div class="a" style="left:1095px;top:1067px;width:12px;height:5px;border-radius:3px;background:#8a8784"></div>
<div class="a" style="left:1161px;top:1067px;width:12px;height:5px;border-radius:3px;background:#8a8784"></div>
<div class="a" style="left:1227px;top:1067px;width:12px;height:5px;border-radius:3px;background:#8a8784"></div>

<div class="a" style="left:925px;top:144px;width:933px;height:905px;border:1px solid #1a1a1a;border-radius:5px 5px 0 0;background:linear-gradient(#9cb6d6 0,#b6cde8 37px,#b9d1ea 38px,#b9d1ea 100%)"></div>
<div class="a" style="left:929px;top:182px;width:925px;height:864px;background:#fff"></div>
<div class="a" style="left:926px;top:182px;width:1px;height:864px;background:#eef6fb"></div>
<div class="a" style="left:927px;top:182px;width:2px;height:864px;background:#c2d3e6"></div>
<div class="a" style="left:926px;top:1046px;width:931px;height:2px;background:#92dcf4"></div>
<div class="a" style="left:1855px;top:182px;width:2px;height:866px;background:#9ad6f2"></div>
<div class="a" style="left:1854px;top:182px;width:1px;height:864px;background:#c4d6ea"></div>
<svg class="a" style="left:929px;top:149px" width="30" height="32" viewBox="0 0 30 32">
<circle cx="14.5" cy="15" r="11.5" fill="url(#gl)"/>
<path d="M4 21 C7 27 14 28.5 19 26.5 C23 25 25.5 21.5 26 17 L21 20 C18 23 12 24 8 22.5 Z" fill="#06406e"/>
<path d="M2.5 18.5 C3 22.5 7 24.5 12 24.5 C17 24.5 20.5 22 22 19.5 L26 17.5 L26 13 L19 13.5 L17.5 16.5 C15 19 10 20 6.5 19.5 C5 19.3 4.8 18 5.5 16 Z" fill="#f4fcff" stroke="#0d2a4a" stroke-width="0.7"/></svg>
<div class="t" style="left:960px;top:158px;font-size:17.6px;color:#111">Hovering chart (Rotator)</div>
<div class="a" style="left:1698px;top:151px;width:49px;height:28px;border:1px solid #6a819e;border-radius:3px;background:linear-gradient(#c5d8ee 0,#bcd0ea 42%,#98b2d2 42%,#9ab4d4 75%,#b0c8e4 100%)"></div>
<div class="a" style="left:1714px;top:163px;width:17px;height:6px;background:#f6f6f6;border:1px solid #4a5a70;border-radius:1px"></div>
<div class="a" style="left:1751px;top:151px;width:49px;height:28px;border:1px solid #6a819e;border-radius:3px;background:linear-gradient(#c5d8ee 0,#bcd0ea 42%,#98b2d2 42%,#9ab4d4 75%,#b0c8e4 100%)"></div>
<div class="a" style="left:1766px;top:157px;width:17px;height:15px;border:4px solid #f6f6f6;outline:1px solid #4a5a70"></div>
<div class="a" style="left:1802px;top:151px;width:50px;height:28px;border:1px solid #4a1a1a;border-radius:3px;background:linear-gradient(#e8a698 0,#e09080 42%,#c84a30 42%,#c44028 75%,#d87060 100%)"></div>
<svg class="a" style="left:1816px;top:155px" width="22" height="20" viewBox="0 0 22 20"><path d="M4 3L18 17M18 3L4 17" stroke="#5a3030" stroke-width="6"/><path d="M4 3L18 17M18 3L4 17" stroke="#f0f0f0" stroke-width="4"/></svg>
<div class="t" style="left:940px;top:189px;font-size:17px;color:#111">Chart</div>
<div class="a" style="left:929px;top:210px;width:925px;height:2px;background:#ececec"></div>
<!-- chart contents -->
<div class="t" style="left:1246px;top:238px;font-family:'Liberation Serif',serif;font-size:28px;color:#000">Prefeito - Voto Estimulado</div>
<div class="t" style="left:1382px;top:274px;font-family:'Liberation Serif',serif;font-size:17px;color:#000">Total</div>
<div class="t" style="left:957px;top:295px;font-family:'Liberation Serif',serif;font-size:12px;line-height:16px;color:#000;white-space:pre">Base: 176 sujeitos
Unweighted</div>
<div class="a" style="left:962px;top:340px;width:746px;height:636px;background:#808080"></div>
<div class="a" style="left:956px;top:334px;width:747px;height:637px;background:#fff;border:1.5px solid #000"></div>
<svg class="a" style="left:0;top:0" width="1920" height="1080" viewBox="0 0 1920 1080"><path d="M1468.98,654.77 A143.5,72.7 0 0 0 1469.00,653.50 L1469.00,686.50 A143.5,72.7 0 0 1 1468.98,687.77 Z" fill="#d08030"/><path d="M1182.00,653.50 A143.5,72.7 0 0 0 1183.12,662.58 L1183.12,695.58 A143.5,72.7 0 0 1 1182.00,686.50 Z" fill="#7e7eb8"/><path d="M1183.12,662.58 A143.5,72.7 0 0 0 1273.03,721.17 L1273.03,754.17 A143.5,72.7 0 0 1 1183.12,695.58 Z" fill="#cf2a7e"/><path d="M1273.03,721.17 A143.5,72.7 0 0 0 1413.61,710.88 L1413.61,743.88 A143.5,72.7 0 0 1 1273.03,754.17 Z" fill="#cc5454"/><path d="M1413.61,710.88 A143.5,72.7 0 0 0 1468.98,654.77 L1468.98,687.77 A143.5,72.7 0 0 1 1413.61,743.88 Z" fill="#2f78c8"/><path d="M1183.12,662.58V695.58" stroke="rgba(0,0,0,0.12)" stroke-width="1"/><path d="M1273.03,721.17V754.17" stroke="rgba(0,0,0,0.12)" stroke-width="1"/><path d="M1413.61,710.88V743.88" stroke="rgba(0,0,0,0.12)" stroke-width="1"/><path d="M1325.5,653.5 L1468.98,654.77 A143.5,72.7 0 0 0 1450.18,617.51 Z" fill="#ffa655" stroke="#d08030" stroke-width="0.6" stroke-opacity="0.6"/><path d="M1325.5,653.5 L1450.18,617.51 A143.5,72.7 0 0 0 1409.39,594.52 Z" fill="#44de44" stroke="#28b028" stroke-width="0.6" stroke-opacity="0.6"/><path d="M1325.5,653.5 L1409.39,594.52 A143.5,72.7 0 0 0 1363.43,583.39 Z" fill="#b4b4b4" stroke="#909090" stroke-width="0.6" stroke-opacity="0.6"/><path d="M1325.5,653.5 L1363.43,583.39 A143.5,72.7 0 0 0 1328.00,580.81 Z" fill="#a03a70" stroke="#802050" stroke-width="0.6" stroke-opacity="0.6"/><path d="M1325.5,653.5 L1328.00,580.81 A143.5,72.7 0 0 0 1312.69,581.09 Z" fill="#3a72b0" stroke="#2a5a90" stroke-width="0.6" stroke-opacity="0.6"/><path d="M1325.5,653.5 L1312.69,581.09 A143.5,72.7 0 0 0 1183.12,662.58 Z" fill="#a2a2d4" stroke="#7e7eb8" stroke-width="0.6" stroke-opacity="0.6"/><path d="M1325.5,653.5 L1183.12,662.58 A143.5,72.7 0 0 0 1273.03,721.17 Z" fill="#ff48a6" stroke="#cf2a7e" stroke-width="0.6" stroke-opacity="0.6"/><path d="M1325.5,653.5 L1273.03,721.17 A143.5,72.7 0 0 0 1413.61,710.88 Z" fill="#ff7a78" stroke="#cc5454" stroke-width="0.6" stroke-opacity="0.6"/><path d="M1325.5,653.5 L1413.61,710.88 A143.5,72.7 0 0 0 1468.98,654.77 Z" fill="#4a9ef0" stroke="#2f78c8" stroke-width="0.6" stroke-opacity="0.6"/><defs><linearGradient id="gr" gradientUnits="userSpaceOnUse" x1="0" y1="580" x2="0" y2="726"><stop offset="0" stop-color="#000" stop-opacity="0.14"/><stop offset="0.5" stop-color="#000" stop-opacity="0.10"/><stop offset="0.62" stop-color="#000" stop-opacity="0"/><stop offset="1" stop-color="#000" stop-opacity="0"/></linearGradient><filter id="bl" x="-0.1" y="-0.3" width="1.2" height="1.6"><feGaussianBlur stdDeviation="2.2"/></filter><clipPath id="tc"><ellipse cx="1325.5" cy="653.5" rx="143.5" ry="72.7"/></clipPath></defs><path d="M1182.0,653.5 A143.5,72.7 0 1 0 1469.0,653.5 A143.5,72.7 0 1 0 1182.0,653.5 Z M1183.5,659.5 A142.0,45.5 0 1 1 1467.5,659.5 A142.0,45.5 0 1 1 1183.5,659.5 Z" fill="url(#gr)" fill-rule="evenodd"/><path d="M1183.5,659.5 A142.0,45.5 0 0 1 1467.5,659.5" fill="none" stroke="#fff" stroke-opacity="0.25" stroke-width="1.2"/><g clip-path="url(#tc)"><path d="M1185.0,655.5 A140.5,61 0 0 0 1466.0,655.5" fill="none" stroke="#fff" stroke-opacity="0.32" stroke-width="7" filter="url(#bl)"/></g><path d="M1156.5,583.8L1212.5,606.8" stroke="#b07a7a" stroke-width="1.1"/><path d="M1153,719.2L1208.4,697.8" stroke="#b07a7a" stroke-width="1.1"/><path d="M1355,759L1346.6,726" stroke="#b07a7a" stroke-width="1.1"/><path d="M1517,701L1454,686" stroke="#b07a7a" stroke-width="1.1"/><path d="M1534,626L1465,635" stroke="#b07a7a" stroke-width="1.1"/><path d="M1485.6,580L1434,604" stroke="#b07a7a" stroke-width="1.1"/><path d="M1418,556L1388,587" stroke="#b07a7a" stroke-width="1.1"/><path d="M1356,546L1346,580" stroke="#b07a7a" stroke-width="1.1"/><path d="M1317,544L1321,579" stroke="#b07a7a" stroke-width="1.1"/></svg>
<svg class="a" style="left:0;top:0" width="1920" height="1080" viewBox="0 0 1920 1080" font-family="Liberation Sans" font-size="17.6" fill="#111"><text x="976" y="577">Walter Tenan</text><text x="1093" y="577" font-weight="bold">25,57%</text><text x="994" y="736">Laranjinha</text><text x="1090" y="736" font-weight="bold">17,05%</text><text x="1431" y="777">Janaina</text><text x="1360" y="777" font-weight="bold">16,48%</text><text x="1594" y="705.6">Carlos Dias</text><text x="1522" y="705.6" font-weight="bold">14,20%</text><text x="1600" y="630">Dani</text><text x="1538" y="630" font-weight="bold">8,52%</text><text x="1553" y="572">Gamê</text><text x="1490" y="572" font-weight="bold">6,82%</text><text x="1485" y="548">Nenhum</text><text x="1422" y="548" font-weight="bold">5,68%</text><text x="1422" y="526">Nixon</text><text x="1360" y="526" font-weight="bold">3,98%</text><text x="1382.5" y="505">Tim</text><text x="1322" y="505" font-weight="bold">1,70%</text><rect x="1755.5" y="336.5" width="40" height="17" fill="#9090c8" stroke="#222" stroke-width="1.2"/><text x="1775.5" y="374" text-anchor="middle">Walter Tenan</text><rect x="1755.5" y="384.5" width="40" height="17" fill="#f0288c" stroke="#222" stroke-width="1.2"/><text x="1775.5" y="422" text-anchor="middle">Laranjinha</text><rect x="1755.5" y="432.5" width="40" height="17" fill="#f06060" stroke="#222" stroke-width="1.2"/><text x="1775.5" y="470" text-anchor="middle">Janaina</text><rect x="1755.5" y="480.5" width="40" height="17" fill="#3a8be8" stroke="#222" stroke-width="1.2"/><text x="1775.5" y="518" text-anchor="middle">Carlos Dias</text><rect x="1755.5" y="528.5" width="40" height="17" fill="#f0a040" stroke="#222" stroke-width="1.2"/><text x="1775.5" y="566" text-anchor="middle">Dani</text><rect x="1755.5" y="576.5" width="40" height="17" fill="#30d030" stroke="#222" stroke-width="1.2"/><text x="1775.5" y="614" text-anchor="middle">Gamê</text><rect x="1755.5" y="624.5" width="40" height="17" fill="#a0a0a0" stroke="#222" stroke-width="1.2"/><text x="1775.5" y="662" text-anchor="middle">Nenhum</text><rect x="1755.5" y="672.5" width="40" height="17" fill="#903060" stroke="#222" stroke-width="1.2"/><text x="1775.5" y="710" text-anchor="middle">Nixon</text><rect x="1755.5" y="720.5" width="40" height="17" fill="#305c90" stroke="#222" stroke-width="1.2"/><text x="1775.5" y="758" text-anchor="middle">Tim</text></svg>
<div class="t" style="left:959px;top:1000px;font-family:'Liberation Serif',serif;font-size:18px;color:#000">PORECATU PR</div>
<div class="t" style="left:1740px;top:1000px;font-family:'Liberation Serif',serif;font-size:18px;color:#000">January/2024</div>

</body></html>
